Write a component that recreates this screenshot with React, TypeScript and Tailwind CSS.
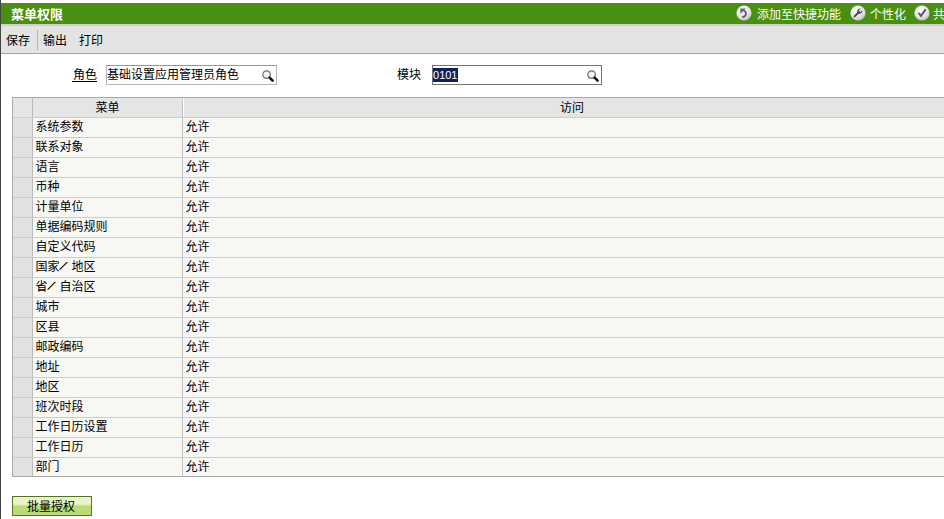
import React from "react";

const menus = [
  "系统参数", "联系对象", "语言", "币种", "计量单位", "单据编码规则", "自定义代码",
  "国家／地区", "省／自治区", "城市", "区县", "邮政编码", "地址", "地区",
  "班次时段", "工作日历设置", "工作日历", "部门",
];

function Ball({ children }: { children: React.ReactNode }) {
  return (
    <svg width="16" height="16" viewBox="0 0 16 16" className="-mt-0.5 block shrink-0">
      <defs>
        <radialGradient id="ball" cx="0.4" cy="0.3" r="0.8">
          <stop offset="0" stopColor="#ffffff" />
          <stop offset="0.6" stopColor="#e2e2e4" />
          <stop offset="1" stopColor="#b4b8b0" />
        </radialGradient>
      </defs>
      <circle cx="8" cy="8" r="7.6" fill="url(#ball)" />
      {children}
    </svg>
  );
}

function Magnifier() {
  return (
    <svg width="12" height="12" viewBox="0 0 12 12" className="mt-px block shrink-0">
      <circle cx="4.6" cy="4.6" r="3.8" fill="#f0f3f3" stroke="#6b6b6b" strokeWidth="1.2" />
      <path d="M7.6 7.6L10.6 10.6" stroke="#111" strokeWidth="2.6" strokeLinecap="round" />
    </svg>
  );
}

function MenuName({ name }: { name: string }) {
  const parts = name.split("／");
  if (parts.length === 1) return <>{name}</>;
  return (
    <>
      {parts[0]}
      <span className="inline-block w-3 align-[2px] text-[8px] leading-none font-black [-webkit-text-stroke:0.5px_black]">／</span>
      {parts[1]}
    </>
  );
}

export default function App() {
  return (
    <div className="flex h-[519px] w-[944px] flex-col overflow-hidden border-l border-[#444] bg-white pt-[3px] font-['Noto_Sans_CJK_SC','Liberation_Sans',sans-serif] text-xs leading-3 whitespace-nowrap text-black">
      <header className="flex h-[21px] shrink-0 items-center bg-[#4a9010] pl-2.5 text-white">
        <h1 className="text-[13px] leading-[21px] font-bold">菜单权限</h1>
        <nav className="ml-auto flex h-[21px] w-[208px] shrink-0 items-center leading-[21px]">
          <Ball>
            <path d="M6.2 12.2C10.8 11.4 11.4 6.6 7 5.2" fill="none" stroke="#595569" strokeWidth="1.7" />
            <path d="M4.4 9V3.6H9.8Z" fill="#6a6578" />
          </Ball>
          <span className="ml-[5px] w-[93px] shrink-0">添加至快捷功能</span>
          <Ball>
            <path d="M4.6 11.4L8.5 7.5" stroke="#4c4b50" strokeWidth="2" strokeLinecap="round" />
            <path d="M10.7 3.5L8.7 5.4L10.4 7.1L12.3 5.2C12.6 7.6 10.8 9.3 8.5 8.7L7.2 7.4C6.8 5.1 8.4 3.2 10.7 3.5Z" fill="#4c4b50" />
          </Ball>
          <span className="ml-1 w-11 shrink-0">个性化</span>
          <Ball>
            <path d="M4.5 7.8L7 10.8L11.7 4.3" fill="none" stroke="#5c5960" strokeWidth="2" />
          </Ball>
          <span className="ml-[3px] shrink-0">共</span>
        </nav>
      </header>
      <div className="flex h-[30px] shrink-0 items-center border-t-2 border-b border-t-[#cfcfcf] border-b-[#a4a4a4] bg-[#e4e4e4] pl-[5px]">
        <span>保存</span>
        <span className="ml-[7px] h-5 border-l border-[#b4b4b4]" />
        <span className="ml-[5px]">输出</span>
        <span className="ml-3">打印</span>
      </div>
      <section className="flex h-[43px] shrink-0 items-start pt-[11px]">
        <span className="mt-[3px] ml-[71px] h-[14px] w-[25px] border-b border-black pl-px">角色</span>
        <div className="ml-[9px] flex h-5 w-[171px] items-center justify-between border border-[#b7b7b7] border-t-[#969696] pr-0.5">
          <span className="-mt-0.5">基础设置应用管理员角色</span>
          <Magnifier />
        </div>
        <span className="mt-[3px] ml-[120px]">模块</span>
        <div className="ml-[11px] flex h-5 w-[170px] items-center justify-between border border-[#747474] pr-0.5">
          <span className="h-[14px] w-[25px] bg-[#14215c] font-['Liberation_Sans',sans-serif] text-[11px] leading-[15px] text-white">0101</span>
          <Magnifier />
        </div>
      </section>
      <main className="ml-[11px] h-[380px] shrink-0 overflow-hidden border-t border-b border-l border-[#aaa]">
        <div className="grid h-5 grid-cols-[20px_150px_1fr] border-b border-[#cdcdcd] bg-[#e5e5e5] text-center leading-[18px]">
          <div className="border-r border-[#b9b9b9]" />
          <div className="border-r border-[#c2c2c2]">菜单</div>
          <div className="border-l border-white pl-4">访问</div>
        </div>
        {menus.map((name) => (
          <div key={name} className="grid h-5 grid-cols-[20px_150px_1fr] border-b border-[#cbcccb] bg-[#f7f8f4] leading-[16px] last:h-[18px] last:border-b-0">
            <div className="border-r border-[#bcbcbc] bg-[#e1e1e3]" />
            <div className="border-r border-[#c3c3c3] pl-[2.5px]"><MenuName name={name} /></div>
            <div className="pl-[2.5px]">允许</div>
          </div>
        ))}
      </main>
      <button className="mt-[19px] ml-[11px] h-5 w-20 shrink-0 border border-[#527624] bg-linear-to-b from-[#e9f5c8] from-40% to-[#b7dc78] to-50% pr-0.5 leading-[18px]">批量授权</button>
    </div>
  );
}
